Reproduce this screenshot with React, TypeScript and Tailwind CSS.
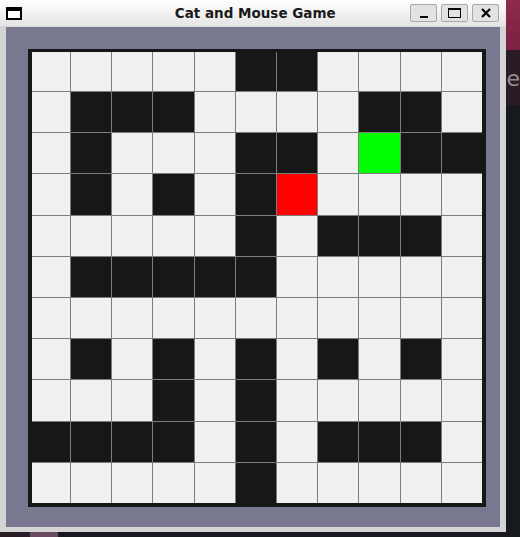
const maze = [
  "WWWWWBBWWWW",
  "WBBBWWWWBBW",
  "WBWWWBBWGBB",
  "WBWBWBRWWWW",
  "WWWWWBWBBBW",
  "WBBBBBWWWWW",
  "WWWWWWWWWWW",
  "WBWBWBWBWBW",
  "WWWBWBWWWWW",
  "BBBBWBWBBBW",
  "WWWWWBWWWWW",
];

const cellColor: Record<string, string> = {
  W: "bg-[#f0f0f0]",
  B: "bg-[#171717]",
  R: "bg-[#ff0000]",
  G: "bg-[#00ff00]",
};

function TitleButton({ children }: { children: React.ReactNode }) {
  return (
    <div className="w-[27px] h-[18px] flex items-center justify-center rounded-[2px] border border-[#a8a8a8] bg-[#e2e2e2]">
      {children}
    </div>
  );
}

export default function App() {
  return (
    <div className="w-[520px] h-[537px] flex flex-col bg-[#16191d] overflow-hidden font-['DejaVu_Sans',sans-serif]">
      <div className="flex h-[532px]">
        {/* window */}
        <div className="w-[512px] flex flex-col">
          {/* title bar */}
          <div className="h-[27px] flex items-center pl-[6px] pr-[6px] bg-gradient-to-b from-[#ffffff] to-[#e4e4e4] border-b border-[#d8d8d8]">
            <div className="w-[16px] h-[13px] border-2 border-black border-t-[4px] bg-white" />
            <div className="flex-1 text-center text-[13.5px] font-bold text-[#1a1a1a] pl-[78px]">Cat and Mouse Game</div>
            <div className="flex gap-[4px] mr-[1px]">
              <TitleButton>
                <div className="w-[8px] h-[2px] bg-black mt-[7px]" />
              </TitleButton>
              <TitleButton>
                <div className="w-[13px] h-[10px] border border-black border-t-2" />
              </TitleButton>
              <TitleButton>
                <svg width="12" height="12" viewBox="0 0 12 12">
                  <path d="M2 2 L10 10 M10 2 L2 10" stroke="black" strokeWidth="2.2" />
                </svg>
              </TitleButton>
            </div>
          </div>
          {/* body */}
          <div className="flex-1 bg-[#787890] border-l-[6px] border-r-[6px] border-b-[5px] border-[#d4d4d4] pl-[22px] pt-[22px]">
            <div className="w-[458px] p-[4px] pt-[3px] bg-[#171717]">
              <div className="w-[450px] h-[451px] grid grid-cols-[38px_repeat(10,1fr)] grid-rows-[39px_repeat(10,1fr)] gap-px bg-[#7c7c7c]">
                {maze.flatMap((row, r) =>
                  row.split("").map((c, i) => (
                    <div key={`${r}-${i}`} className={cellColor[c]} />
                  ))
                )}
              </div>
            </div>
          </div>
        </div>
        {/* desktop strip */}
        <div className="flex-1 flex flex-col">
          <div className="h-[50px] bg-gradient-to-b from-[#8e2a4e] to-[#7a2242]" />
          <div className="h-[55px] bg-[#2a1c24] text-[#9a8e96] text-[22px] leading-none pt-[18px] overflow-hidden">e</div>
          <div className="flex-1 bg-[#16191d]" />
        </div>
      </div>
      <div className="h-[5px] flex">
        <div className="w-[30px] bg-[#2a1c24]" />
        <div className="w-[28px] bg-[#6a4a60]" />
        <div className="flex-1 bg-[#16191d]" />
      </div>
    </div>
  );
}
